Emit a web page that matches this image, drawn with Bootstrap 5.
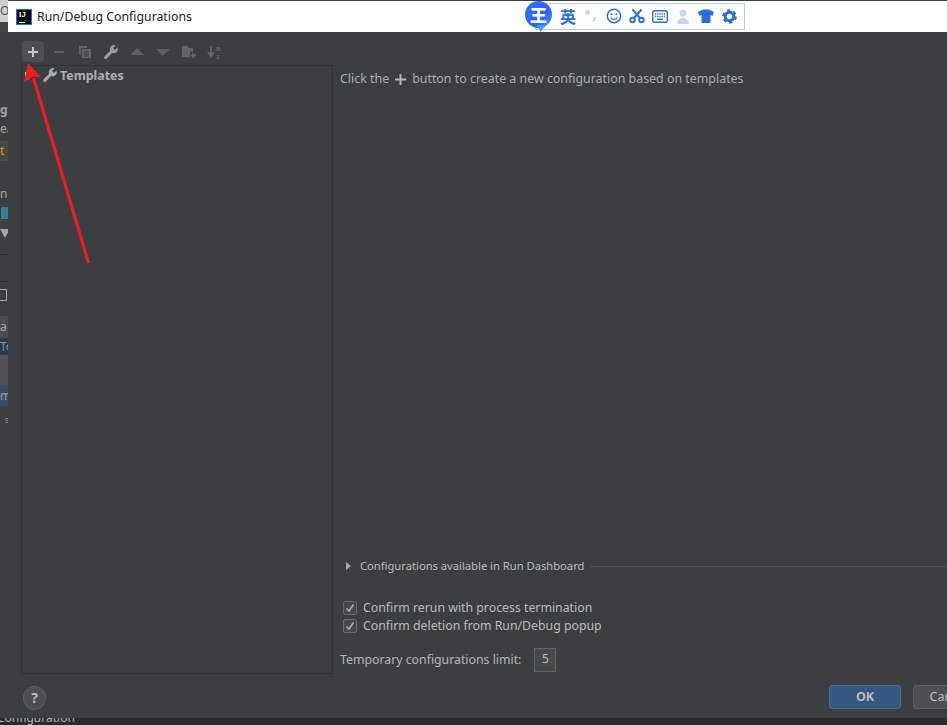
<!DOCTYPE html>
<html lang="en">
<head>
<meta charset="utf-8">
<title>Run/Debug Configurations</title>
<link href="https://cdn.jsdelivr.net/npm/bootstrap@5.3.0/dist/css/bootstrap.min.css" rel="stylesheet">
<style>
html,body{height:725px;overflow:hidden}
body{background:#2b2b2b;font-family:"Noto Sans","Open Sans",sans-serif;font-size:12.4px;color:#bbb;position:relative}
.desk{height:718px;position:relative;z-index:1}
.idestrip{width:8px;flex:0 0 8px;background:#3c3f41;overflow:hidden;font-size:12px;line-height:1;white-space:nowrap;color:#a4a6a8}
.idestrip>div{overflow:hidden}
.s-a{height:22px;background:#cfcfcf;color:#555;padding-top:5px}
.s-b{height:10px;background:#444}
.s-c{height:72px;background:#3c3f41}
.s-d{height:14px;font-weight:700}
.s-e{height:23px;padding-top:5px}
.s-f{height:20px;background:#504a3e;color:#c0965a;padding-top:4px}
.s-g{height:46px;padding-top:27px}
.s-h{height:12px;background:linear-gradient(90deg,#3c3f41 0 1px,#3d7d9a 1px)}
.s-i{height:36px;border-bottom:1px solid #2f2f2f;padding-top:10px}
.s-i i{display:block;width:0;height:0;border-left:5px solid transparent;border-right:5px solid transparent;border-top:9px solid #a4a6a8;margin-left:0}
.s-j{height:27px;border-bottom:1px solid #2f2f2f}
.s-k{height:34px;padding-top:7px}
.s-k i{display:block;width:7px;height:12px;border:1px solid #a4a6a8;border-left:0}
.s-l{height:22px;background:#4a4d4f;padding-top:5px}
.s-m{height:17px;background:#2d3a46;color:#6f9fb5;padding-top:3px}
.s-n{height:30px;background:#505355}
.s-o{height:21px;background:#3a4a63;padding-top:5px}
.s-p{height:26px;padding:9px 0 0 5px;font-size:9px;color:#8b8d8f}
.dlg{flex:1 0 0;min-width:0;background:#3c3f41;overflow:hidden}
.dlg-title{height:31px;background:#fff;color:#1a1a1a;font-size:12.3px;padding-left:8px;gap:5px;margin-top:1px}
.dlg-name{padding-top:2px}
.ijlogo{width:16px;height:16px;background:#000;border:1px solid #0a7be0;color:#fff;font:700 8px/8px "Liberation Sans",sans-serif;padding:1px 0 0 2px;position:relative}
.ijlogo::after{content:"";position:absolute;left:2px;bottom:1px;width:6px;height:1px;background:#fff}
.tbar{height:33px;padding-left:14px;padding-top:9px;align-items:flex-start}
.tbtn{width:22px;height:21px;margin-right:4px;border-radius:3px;display:flex;align-items:center;justify-content:center}
.tbtn.on{background:#4c5052}
.tbtn svg{display:block}
.main{flex:1 1 0;min-height:0;padding-left:13px}
.tree{width:312px;flex:0 0 312px;border:1px solid #313335;padding:1px 0 0 20px;gap:2px}
.tree-lb{font-size:12.4px;font-weight:700;line-height:18px;color:#a9b0b5}
.pane{flex:1 1 0;min-width:0;padding-left:7px}
.hint{margin-top:5px;line-height:18px;color:#a9adaf;gap:6px;height:18px}
.spacer{flex:1 1 0}
.dash{height:18px;font-size:11.2px;color:#bbb;gap:8px;margin-bottom:24px;padding-left:6px}
.dash-line{flex:1;height:1px;background:#515151;margin-left:-2px}
.tri{width:0;height:0;border-left:5px solid #a8a8a8;border-top:4px solid transparent;border-bottom:4px solid transparent;margin-right:1px}
.chk{height:18px;gap:6px;padding-left:3px;color:#bbb;font-size:12.3px}
.chkbox{width:14px;height:14px;background:#43494a;border:1px solid #6b6b6b;border-radius:2px;display:flex;align-items:center;justify-content:center}
.lim{margin-top:12px;margin-bottom:1px;height:26px;gap:13px;color:#b4b7b9;font-size:12.3px}
.limbox{width:22px;height:24px;border:1px solid #646464;background:#45494a;line-height:20px;text-align:center;font-size:12px;color:#bbb}
.foot{height:44px;padding:11px 0 0 15px;flex:0 0 44px}
.helpbtn{width:23px;height:24px;border-radius:50%;background:#4c5052;border:1px solid #5a5d5f;color:#bbb;font-weight:700;font-size:14px;line-height:21px;text-align:center;margin-top:1px}
.dbtn{height:24px;width:72px;flex:0 0 72px;border-radius:3px;font-size:12.5px;line-height:22px;text-align:center}
.dbtn-ok{background:#365880;border:1px solid #4c708c;color:#bbb;font-weight:700}
.dbtn-no{background:#4c5052;border:1px solid #5e6060;color:#bbb;margin-left:12px;margin-right:-38px}
.stat{position:absolute;left:-3px;top:710px;color:#a9b7c6;font-size:12px;line-height:16px}
.ime{position:absolute;left:525px;top:1px;width:220px;height:29px;z-index:2}
.ime-box{position:absolute;left:10px;right:0;top:2px;bottom:0;background:#fff;border:1px solid #b3cdf5}
.ime-logo{position:absolute;left:0;top:0;width:27px;height:27px;border-radius:50%;background:linear-gradient(135deg,#2f7bf6,#2f5ff0 60%,#35a0f8);color:#fff;font:900 17px/27px "Noto Sans CJK SC",sans-serif;text-align:center}
.ime-logo::after{content:"";position:absolute;left:12px;bottom:-4px;width:9px;height:7px;background:#35a0f8;clip-path:polygon(0 0,100% 0,40% 100%)}
.ime-row{position:absolute;left:35px;top:4px}
.ime-zh{color:#2b6fd4;font:700 16px/22px "Noto Sans CJK SC",sans-serif;width:16px}
.ime-ic{width:23px;display:flex;justify-content:center;align-items:center;height:22px}
.ime-first{margin-left:3.500px}
.arrowlay{position:absolute;left:0;top:0;pointer-events:none;z-index:2}
</style>
</head>
<body>
<div class="stat">Configuration</div>
<div class="desk d-flex">
  <div class="idestrip">
    <div class="s-a">O:</div><div class="s-b"></div><div class="s-c"></div>
    <div class="s-d">g</div><div class="s-e">ea</div><div class="s-f">t</div>
    <div class="s-g">n</div><div class="s-h"></div><div class="s-i"><i></i></div><div class="s-j"></div>
    <div class="s-k"><i></i></div><div class="s-l">a</div><div class="s-m">To</div><div class="s-n"></div><div class="s-o">m</div><div class="s-p">s</div>
  </div>
  <div class="dlg d-flex flex-column">
    <div class="dlg-title d-flex align-items-center flex-shrink-0">
      <div class="ijlogo">IJ</div><span class="dlg-name">Run/Debug Configurations</span>
    </div>
    <div class="tbar d-flex flex-shrink-0">
      <div class="tbtn on"><svg width="12" height="12" viewBox="0 0 12 12"><path d="M5 1h2v4h4v2H7v4H5V7H1V5h4z" fill="#c4c6c8"/></svg></div>
      <div class="tbtn"><svg width="12" height="12" viewBox="0 0 12 12"><rect x="1" y="5" width="10" height="2" fill="#5d6062"/></svg></div>
      <div class="tbtn"><svg width="14" height="14" viewBox="0 0 14 14"><path d="M1 1h8v2H3v7H1z" fill="#626567"/><path d="M4 4h9v9H4z" fill="#626567"/><path d="M6 7h5M6 9h5M6 11h5" stroke="#3c3f41"/></svg></div>
      <div class="tbtn"><svg width="16" height="16" viewBox="0 0 16 16"><path d="M14.600 3.400 12 6 10 4l2.600-2.600A4.200 4.200 0 0 0 7 6.800l-5.400 5.400a1.600 1.600 0 0 0 2.300 2.300L9.200 9a4.200 4.200 0 0 0 5.400-5.600z" fill="#9a9c9e"/></svg></div>
      <div class="tbtn"><svg width="14" height="8" viewBox="0 0 14 8"><path d="M7 0l7 7H0z" fill="#5d6062"/></svg></div>
      <div class="tbtn"><svg width="14" height="8" viewBox="0 0 14 8"><path d="M0 1h14L7 8z" fill="#5d6062"/></svg></div>
      <div class="tbtn"><svg width="16" height="14" viewBox="0 0 16 14"><path d="M1 1h5l2 2h4v4H9v5H1z" fill="#626567"/><path d="M12 8v5M10 10.500h5" stroke="#626567" stroke-width="2"/></svg></div>
      <div class="tbtn"><svg width="16" height="16" viewBox="0 0 16 16"><path d="M4 2v9M1 8l3 4 3-4" fill="none" stroke="#626567" stroke-width="2"/><text x="9" y="7" font-size="7.500" font-weight="700" fill="#626567" font-family="Liberation Sans">a</text><text x="9" y="14.500" font-size="7.500" font-weight="700" fill="#626567" font-family="Liberation Sans">z</text></svg></div>
    </div>
    <div class="main d-flex">
      <div class="tree d-flex align-items-start">
        <svg class="flex-shrink-0" width="16" height="16" viewBox="0 0 16 16"><path d="M14.600 3.400 12 6 10 4l2.600-2.600A4.200 4.200 0 0 0 7 6.800l-5.400 5.400a1.600 1.600 0 0 0 2.300 2.300L9.200 9a4.200 4.200 0 0 0 5.400-5.600z" fill="#a9a9a9"/></svg>
        <span class="tree-lb">Templates</span>
      </div>
      <div class="pane d-flex flex-column">
        <div class="hint d-flex align-items-center">
          <span>Click the</span>
          <svg width="11" height="11" viewBox="0 0 11 11"><path d="M4.500 0h2v4.500H11v2H6.500V11h-2V6.500H0v-2h4.500z" fill="#b5b7b9"/></svg>
          <span>button to create a new configuration based on templates</span>
        </div>
        <div class="spacer"></div>
        <div class="dash d-flex align-items-center"><span class="tri"></span><span>Configurations available in Run Dashboard</span><span class="dash-line"></span></div>
        <div class="chk d-flex align-items-center"><span class="chkbox"><svg width="10" height="10" viewBox="0 0 10 10"><path d="M1.500 5.500 4 8l4.500-6.500" fill="none" stroke="#a9a9a9" stroke-width="1.700"/></svg></span><span>Confirm rerun with process termination</span></div>
        <div class="chk d-flex align-items-center"><span class="chkbox"><svg width="10" height="10" viewBox="0 0 10 10"><path d="M1.500 5.500 4 8l4.500-6.500" fill="none" stroke="#a9a9a9" stroke-width="1.700"/></svg></span><span>Confirm deletion from Run/Debug popup</span></div>
        <div class="lim d-flex align-items-center"><span>Temporary configurations limit:</span><span class="limbox">5</span></div>
      </div>
    </div>
    <div class="foot d-flex justify-content-between overflow-hidden">
      <div class="helpbtn">?</div>
      <div class="d-flex"><div class="dbtn dbtn-ok">OK</div><div class="dbtn dbtn-no">Cancel</div></div>
    </div>
  </div>
</div>
<div class="ime">
  <div class="ime-box"></div>
  <div class="ime-logo">王</div>
  <div class="ime-row d-flex align-items-center">
    <span class="ime-zh">英</span>
    <span class="ime-ic ime-first"><svg width="14" height="16" viewBox="0 0 14 16"><circle cx="3.500" cy="4.500" r="2.500" fill="#c3d6f3"/><path d="M10 9c2 0 2 3-1 5 1-1 1-3 1-5z" fill="#c3d6f3" stroke="#c3d6f3"/></svg></span>
    <span class="ime-ic"><svg width="16" height="16" viewBox="0 0 16 16"><circle cx="8" cy="8" r="6.700" fill="none" stroke="#2b6fd4" stroke-width="1.500"/><circle cx="5.700" cy="6.300" r="1" fill="#2b6fd4"/><circle cx="10.300" cy="6.300" r="1" fill="#2b6fd4"/><path d="M4.800 9.500c1.500 2.500 4.900 2.500 6.400 0" fill="none" stroke="#2b6fd4" stroke-width="1.300"/></svg></span>
    <span class="ime-ic"><svg width="16" height="16" viewBox="0 0 16 16"><circle cx="3.500" cy="12" r="2.300" fill="none" stroke="#2b6fd4" stroke-width="1.900"/><circle cx="12.500" cy="12" r="2.300" fill="none" stroke="#2b6fd4" stroke-width="1.900"/><path d="M5 10 12.500 1.500M11 10 3.500 1.500" stroke="#2b6fd4" stroke-width="2"/></svg></span>
    <span class="ime-ic"><svg width="16" height="13" viewBox="0 0 16 13"><rect x=".7" y=".7" width="14.600" height="11.600" rx="1.500" fill="none" stroke="#2b6fd4" stroke-width="1.400"/><path d="M3 4h10M3 6.500h10" stroke="#2b6fd4" stroke-width="1.300" stroke-dasharray="1.300 .9"/><path d="M5 9.300h6" stroke="#2b6fd4" stroke-width="1.400"/></svg></span>
    <span class="ime-ic"><svg width="14" height="15" viewBox="0 0 14 15"><circle cx="7" cy="4" r="3.500" fill="#c3d6f3"/><path d="M1 15c0-8 12-8 12 0z" fill="#c3d6f3"/></svg></span>
    <span class="ime-ic"><svg width="16" height="14" viewBox="0 0 16 14"><path d="M5 .5h6L16 3l-1.500 4L12.500 6v8h-9V6L1.500 7 0 3z" fill="#2b6fd4"/></svg></span>
    <span class="ime-ic"><svg width="15" height="15" viewBox="0 0 15 15"><circle cx="7.500" cy="7.500" r="4.200" fill="none" stroke="#2b6fd4" stroke-width="3"/><circle cx="7.500" cy="7.500" r="6.300" fill="none" stroke="#2b6fd4" stroke-width="2" stroke-dasharray="3.300 3.300"/></svg></span>
  </div>
</div>
<svg class="arrowlay" width="120" height="280" viewBox="0 0 120 280">
  <path d="M25 72h3.500v8H25z" fill="#d0d0d0"/>
  <path d="M33.500 78 88.500 263" stroke="#ed1c24" stroke-width="3.200" fill="none"/>
  <path d="M28 63 41 77 33 77 24 82z" fill="#ed1c24"/>
</svg>
</body>
</html>
